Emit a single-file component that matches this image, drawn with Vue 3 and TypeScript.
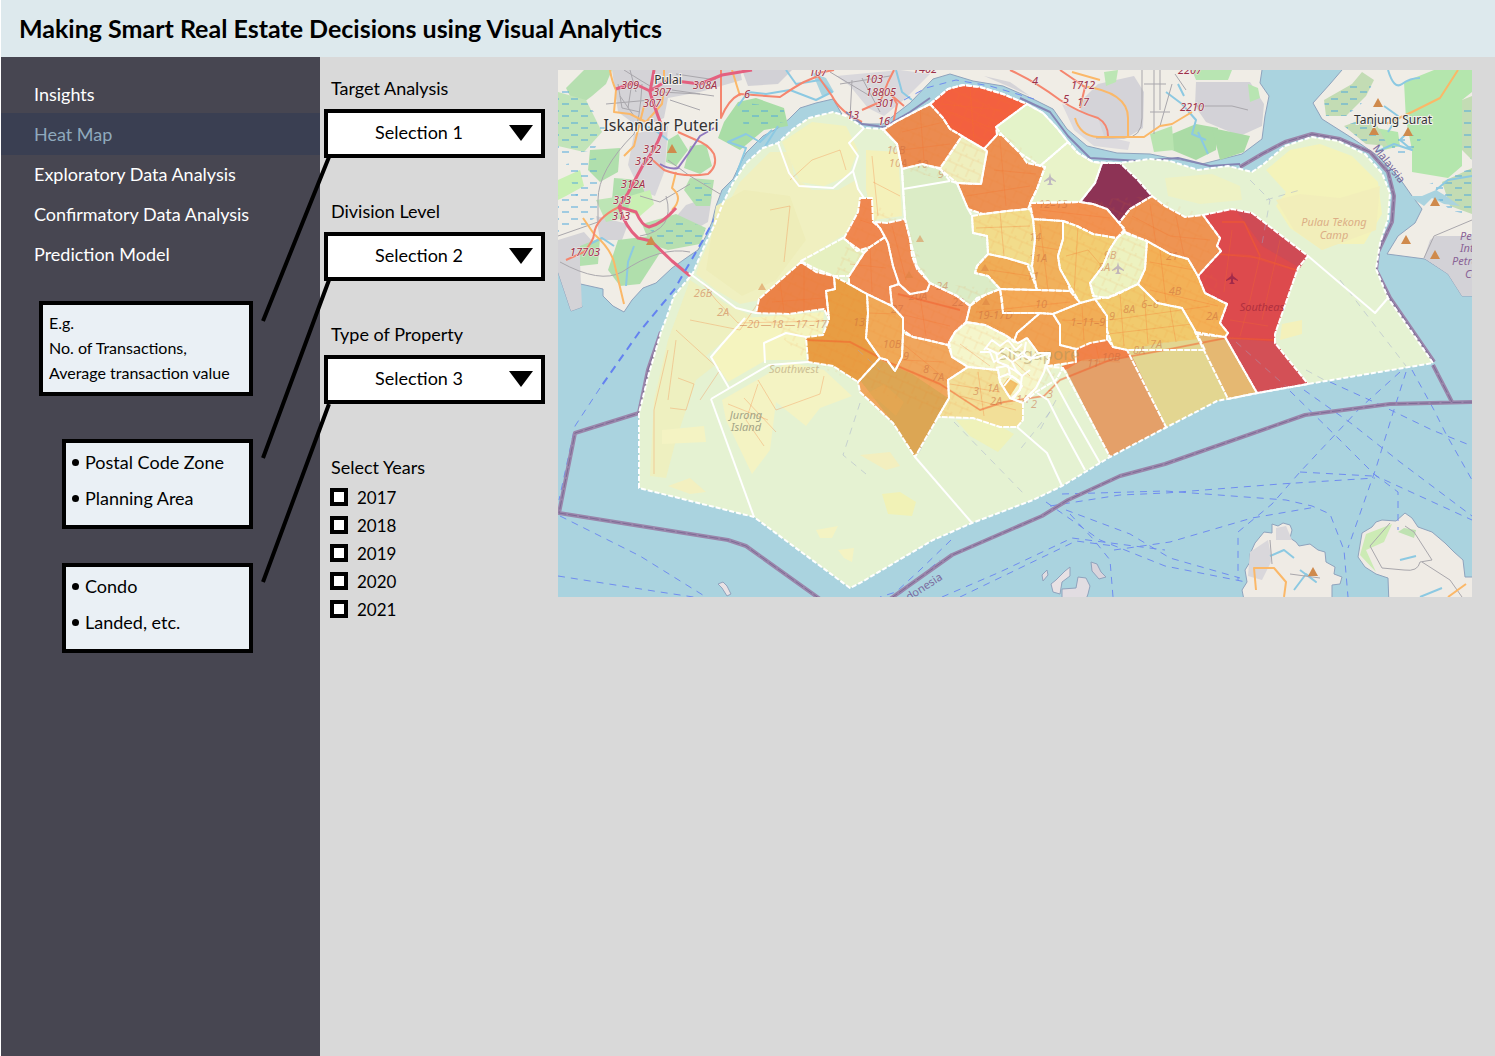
<script setup lang="ts">
import { ref } from 'vue'

interface Shape { points: string; fill: string }
interface Label { x: number; y: number; text: string }

const navItems = ['Insights', 'Heat Map', 'Exploratory Data Analysis', 'Confirmatory Data Analysis', 'Prediction Model']
const active = ref('Heat Map')

const options = ['Selection 1', 'Selection 2', 'Selection 3']
const filters = ref([
  { id: 'target', label: 'Target Analysis', value: 'Selection 1' },
  { id: 'division', label: 'Division Level', value: 'Selection 2' },
  { id: 'property', label: 'Type of Property', value: 'Selection 3' },
])
const years = ['2017', '2018', '2019', '2020', '2021']
const selectedYears = ref<string[]>([])

const coast =
  '639,488 639,413 648,377 661,332 666,319 674,296 693,273 703,249 714,226 723,203 733,183 746,163 763,148 778,143 793,129 809,118 833,112 846,116 864,128 883,129 897,121 930,104 948,89 963,85 980,87 1003,94 1027,104 1043,113 1057,128 1068,142 1078,153 1093,162 1120,163 1150,159 1170,161 1198,170 1228,166 1252,172 1265,163 1285,146 1312,137 1338,141 1365,154 1382,173 1390,193 1388,219 1380,243 1376,269 1388,298 1413,334 1433,363 1308,384 1258,393 1217,401 1167,427 1110,457 1062,486 1033,500 972,523 933,540 860,583 850,588 754,517'

const mainland: Shape[] = [
  { fill: '#f0ede6', points: '550,60 1262,60 1262,70 1260,83 1269,96 1265,116 1262,139 1242,154 1202,164 1170,158 1150,154 1117,153 1087,146 1067,129 1053,109 1033,99 1003,86 973,81 950,74 933,79 910,103 883,124 864,124 843,116 833,99 816,103 800,108 789,119 778,128 763,136 746,153 740,164 733,179 722,190 716,206 712,222 706,236 698,250 689,256 672,268 656,283 643,288 632,300 624,312 613,306 603,296 603,289 576,283 572,270 582,307 571,311 558,272 550,262' },
  { fill: '#f0ede6', points: '1342,60 1342,70 1330,84 1313,103 1322,119 1352,138 1378,156 1398,176 1412,196 1422,209 1415,223 1398,236 1387,254 1425,259 1448,274 1462,296 1480,296 1480,60' },
  { fill: '#efebe5', points: '1255,543 1264,532 1272,533 1272,524 1278,526 1283,523 1290,525 1292,530 1290,538 1296,542 1299,546 1310,544 1318,550 1325,552 1326,562 1335,567 1334,574 1342,577 1340,584 1332,585 1332,605 1245,605 1242,590 1247,582 1245,570 1250,562 1250,554' },
  { fill: '#efebe5', points: '1358,557 1362,533 1372,527 1376,522 1382,520 1396,521 1405,513 1412,518 1418,527 1432,532 1445,543 1454,552 1463,560 1465,577 1480,577 1480,605 1389,605 1388,578 1376,574 1365,567' },
  { fill: '#e8e1e4', points: '1065,571 1070,567 1070,576 1062,582 1060,594 1053,592 1051,584 1056,580' },
  { fill: '#e2dde2', points: '1078,577 1086,578 1090,586 1088,594 1084,605 1062,605 1062,589 1076,588' },
  { fill: '#d9d4dc', points: '1091,562 1097,564 1101,572 1106,577 1099,579 1092,571' },
  { fill: '#e2dde2', points: '1042,575 1047,570 1048,575 1043,581' },
  { fill: '#e8e1e4', points: '718,584 723,582 727,586 731,594 727,596 722,588' },
]

const landCover: Shape[] = [
  { fill: '#d4d3d7', points: '612,70 740,70 742,80 700,92 668,98 664,118 640,128 618,112' },
  { fill: '#d7d6da', points: '634,134 668,126 665,170 655,196 640,190 628,165' },
  { fill: '#d4d3d7', points: '558,240 584,232 600,250 580,262 582,307 571,311 558,272' },
  { fill: '#d4d3d7', points: '686,205 712,196 708,222 694,230 670,224' },
  { fill: '#d4d3d7', points: '596,216 628,224 622,240 600,240' },
  { fill: '#d2d1d6', points: '742,70 792,70 778,84 748,86' },
  { fill: '#d9d8dc', points: '836,76 900,70 930,74 906,98 884,116 868,108 850,86' },
  { fill: '#d5d4d8', points: '984,76 1010,82 1030,96 1012,88' },
  { fill: '#d4d3d8', points: '1098,84 1134,76 1144,92 1143,128 1128,137 1096,138 1078,118 1084,98' },
  { fill: '#dcdade', points: '1062,104 1098,118 1104,136 1130,142 1128,150 1094,146 1074,130' },
  { fill: '#d3d2d7', points: '1196,82 1250,82 1264,104 1262,126 1240,136 1206,122 1195,106' },
  { fill: '#b6dfb0', points: '584,70 612,70 606,84 592,96 576,108 566,88' },
  { fill: '#c2e4b9', points: '558,92 586,100 602,132 584,152 558,146' },
  { fill: '#b0dfac', points: '614,178 640,180 646,196 626,210 612,200' },
  { fill: '#b0dfac', points: '668,140 678,134 688,150 676,166 666,162' },
  { fill: '#b0dfac', points: '690,146 706,144 712,166 700,174 684,168' },
  { fill: '#b0dfac', points: '590,150 620,148 618,172 600,182 588,170' },
  { fill: '#a9dda6', points: '724,122 738,102 756,98 784,108 788,126 764,130 740,150 718,138' },
  { fill: '#b3e0ae', points: '690,178 714,180 710,206 696,206 684,190' },
  { fill: '#b6dfb0', points: '642,224 676,214 706,228 700,244 668,250 650,244' },
  { fill: '#b3e0ae', points: '580,246 600,238 598,264 580,266' },
  { fill: '#b0dfac', points: '618,240 650,236 662,250 640,284 620,286 608,270' },
  { fill: '#c9f0b3', points: '558,180 580,170 584,186 566,196 558,200' },
  { fill: '#c9f0b3', points: '630,196 650,190 654,204 640,216 628,212' },
  { fill: '#bde5b5', points: '596,200 622,196 624,218 606,222' },
  { fill: '#bce6b4', points: '1104,72 1118,70 1116,82 1106,86' },
  { fill: '#aadba5', points: '1172,134 1196,124 1218,128 1216,150 1196,160 1172,150' },
  { fill: '#aadba5', points: '1212,128 1250,136 1244,152 1220,160' },
  { fill: '#b8e5b2', points: '1192,70 1232,70 1228,80 1196,80' },
  { fill: '#b8e5b2', points: '1248,84 1258,88 1260,98 1250,102' },
  { fill: '#b9e4b0', points: '1150,134 1172,126 1174,150 1154,152' },
  { fill: '#b4e6ad', points: '1404,82 1434,70 1472,70 1472,92 1462,100 1462,166 1448,178 1412,172 1412,150 1406,120' },
  { fill: '#b4e6ad', points: '1376,128 1398,132 1400,146 1384,150' },
  { fill: '#c3dcb4', points: '1324,100 1352,84 1362,72 1374,80 1366,96 1346,116 1326,116' },
  { fill: '#c3dcb4', points: '1344,126 1372,116 1388,146 1366,144' },
  { fill: '#c3dcb4', points: '1462,100 1472,96 1472,160 1462,150' },
  { fill: '#c3dcb4', points: '1442,182 1472,168 1472,214 1450,206' },
  { fill: '#d3d2d7', points: '1430,240 1436,236 1472,236 1472,296 1462,296 1448,274 1424,258' },
  { fill: '#d9d7db', points: '1250,552 1268,540 1272,560 1262,580 1248,576' },
  { fill: '#d9d7db', points: '1276,528 1286,526 1292,540 1276,540' },
  { fill: '#ccebb5', points: '1360,555 1366,534 1392,524 1384,542 1366,550 1376,572' },
  { fill: '#bfe2b2', points: '1404,528 1416,530 1414,538 1398,532' },
]

const lagoons: string[] = [
  '1404,196 1422,196 1436,190 1446,196 1460,206 1444,204 1432,198 1424,206 1412,198',
  '812,72 826,78 834,92 822,96',
]

// Lighter reclaimed and inhabited land showing through the overlay
const paleLand: Shape[] = [
  { fill: '#f0f0c0', points: '700,262 716,226 740,182 770,152 790,152 794,176 812,190 838,190 856,180 862,198 848,232 800,262 760,300 740,304 716,290 696,274' },
  { fill: '#eef0c0', points: '690,280 726,304 752,316 720,344 706,356 714,366 696,380 676,440 666,478 650,476 654,400 668,340' },
  { fill: '#f2f2be', points: '782,142 812,122 846,126 858,150 848,176 824,186 800,182' },
  { fill: '#f5f4bf', points: '744,318 824,312 822,334 806,337 806,360 766,360 728,382 712,358' },
  { fill: '#eeedb9', points: '716,206 744,190 790,196 806,240 776,280 742,296 706,270' },
  { fill: '#f4f3c3', points: '722,400 764,376 788,362 824,370 852,396 820,408 806,426 776,402 770,450 752,474 726,420' },
  { fill: '#f4f3c3', points: '662,430 704,426 706,442 662,444' },
  { fill: '#f3f0c0', points: '668,486 690,478 706,492 690,494' },
  { fill: '#f4f3ba', points: '1266,170 1290,150 1320,144 1352,156 1378,182 1382,214 1364,244 1336,244 1322,250 1290,228 1276,206 1286,192' },
  { fill: '#f2eeba', points: '1276,200 1300,194 1340,198 1380,186 1376,230 1322,250 1294,230' },
  { fill: '#eef2c4', points: '1165,178 1212,174 1240,186 1242,200 1200,204 1168,196' },
  { fill: '#f4f1ba', points: '866,150 898,152 902,216 874,220 866,190' },
  { fill: '#eff2ba', points: '956,420 990,420 1014,434 998,452 970,436' },
  { fill: '#f1f2b6', points: '882,494 900,492 916,502 912,516 888,514' },
  { fill: '#f4f3c3', points: '816,530 838,526 832,538 820,538' },
  { fill: '#f4f3c3', points: '838,550 854,548 852,562 844,558' },
  { fill: '#f3efbf', points: '860,455 890,452 900,466 886,470' },
  { fill: '#f4f1bb', points: '1282,324 1302,320 1302,334 1280,340' },
]

const regions: Shape[] = [
  { fill: '#f3603f', points: '930,104 948,89 963,85 980,87 1003,94 1027,104 996,127 997,135 984,149 962,136 950,129 943,118' },
  { fill: '#eb8b50', points: '930,104 943,118 950,129 962,136 940,168 922,164 902,169 897,144 883,130 897,121' },
  { fill: '#efefbe', points: '962,136 984,149 987,151 981,184 957,183 940,169' },
  { fill: '#e4f3c9', points: '1027,104 1043,113 1057,128 1068,142 1040,166 1020,153 1002,135 996,127' },
  { fill: '#ed9052', points: '984,149 997,135 1002,135 1020,153 1027,163 1045,167 1037,189 1030,204 1028,209 1007,211 983,214 968,209 957,183 981,184 987,151' },
  { fill: '#e9f3c9', points: '1040,166 1068,142 1078,153 1093,162 1102,163 1095,183 1080,202 1030,203 1037,189 1045,167' },
  { fill: '#8d3355', points: '1102,163 1120,163 1137,179 1152,196 1130,209 1119,223 1107,209 1093,204 1080,202 1095,183' },
  { fill: '#f29251', points: '1030,203 1080,202 1093,204 1107,209 1119,223 1125,229 1117,238 1093,234 1077,226 1063,221 1033,219' },
  { fill: '#ee9453', points: '1152,196 1165,206 1185,217 1203,215 1220,238 1217,246 1221,251 1207,266 1198,276 1188,259 1170,254 1147,241 1127,234 1119,223 1130,209' },
  { fill: '#dd4a4d', points: '1203,215 1232,209 1252,213 1308,256 1298,268 1275,334 1275,343 1308,384 1257,393 1225,337 1228,333 1220,323 1227,304 1205,293 1198,276 1207,266 1221,251 1217,246 1220,238' },
  { fill: '#f3b157', points: '1147,241 1170,254 1188,259 1198,276 1205,293 1227,304 1220,323 1228,333 1225,337 1197,334 1182,308 1157,303 1138,284 1145,269' },
  { fill: '#f1ca6d', points: '1095,299 1109,297 1138,284 1157,303 1182,308 1197,334 1205,350 1127,350 1113,347 1107,330 1107,316' },
  { fill: '#e3d691', points: '1127,350 1160,343 1200,339 1228,399 1217,401 1167,427' },
  { fill: '#e5b872', points: '1195,332 1225,337 1257,393 1228,399' },
  { fill: '#edf2c0', points: '1125,232 1147,241 1145,269 1138,284 1120,293 1108,298 1093,296 1090,283 1103,266 1110,249 1117,238' },
  { fill: '#f2cd72', points: '1063,221 1077,226 1093,234 1117,238 1110,249 1103,266 1090,283 1095,299 1080,303 1068,283 1060,269 1058,256 1063,239' },
  { fill: '#f1b15c', points: '1033,219 1063,221 1063,239 1058,256 1060,269 1068,283 1070,291 1037,290 1032,266 1035,239' },
  { fill: '#f2dc8b', points: '972,216 983,214 1007,211 1030,209 1033,219 1035,239 1032,266 1027,264 1007,258 988,254 987,236 973,233' },
  { fill: '#f0ad57', points: '988,254 1007,258 1027,264 1032,276 1037,290 1000,289 988,276 975,273 977,266' },
  { fill: '#dbecc6', points: '902,169 922,164 940,169 950,181 957,183 968,209 972,216 973,233 987,236 988,254 977,266 975,273 988,276 1000,289 985,295 977,298 970,306 957,296 930,283 917,266 910,239 905,219' },
  { fill: '#ee8b53', points: '875,222 887,223 905,219 910,239 912,256 917,269 930,283 927,291 910,294 899,284 893,266 888,243 880,228' },
  { fill: '#ef8750', points: '860,198 872,198 873,222 880,228 885,237 870,247 857,251 844,238 858,212' },
  { fill: '#ee8b52', points: '885,237 888,243 893,266 899,284 890,287 892,306 867,294 849,284 849,276 864,253 870,247' },
  { fill: '#e6f0c0', points: '801,261 843,238 864,253 849,276 834,276 816,269' },
  { fill: '#eb8348', points: '801,262 816,272 834,276 835,289 826,291 829,319 824,309 789,314 756,313 759,299' },
  { fill: '#e89d43', points: '834,276 849,284 867,294 868,313 866,338 880,358 858,382 833,366 808,362 806,337 823,335 829,319 826,291 835,289' },
  { fill: '#f0a957', points: '867,294 892,306 903,318 903,333 902,357 895,371 887,360 880,358 866,338 868,313' },
  { fill: '#f0a65d', points: '880,358 887,360 895,371 902,357 903,333 913,337 927,340 948,345 952,357 968,367 948,380 949,398 938,417 915,457 893,423 860,392 858,382' },
  { fill: '#dca654', points: '860,380 880,360 912,374 948,398 938,417 915,457 893,423' },
  { fill: '#f08f57', points: '890,287 899,284 910,294 927,291 930,283 957,296 970,306 966,323 955,332 948,345 927,340 913,337 903,330 903,318 892,306' },
  { fill: '#eea152', points: '970,306 985,295 1000,289 1002,300 1003,313 1040,313 1017,333 1014,342 1005,335 985,325 966,322' },
  { fill: '#f3a956', points: '1000,289 1037,290 1070,291 1080,303 1053,314 1040,313 1003,313' },
  { fill: '#f1ae57', points: '1053,314 1080,303 1095,299 1107,316 1107,340 1090,343 1077,349 1060,345 1060,325' },
  { fill: '#f0a254', points: '1040,313 1053,314 1060,325 1060,345 1075,349 1076,362 1048,366 1050,353 1038,353 1027,338 1018,343 1014,341 1017,333' },
  { fill: '#f1824a', points: '1108,340 1113,347 1127,350 1136,364 1063,370 1062,366 1076,362 1077,349 1090,343' },
  { fill: '#e4a069', points: '1066,370 1082,360 1132,356 1166,427 1110,457' },
  { fill: '#f2df98', points: '948,380 968,367 998,370 1000,382 1010,398 1023,403 1023,420 1017,427 1000,427 973,418 938,417 949,398' },
  { fill: '#f5f6cb', points: '966,322 985,325 1005,335 1018,343 1027,338 1038,353 1050,353 1046,366 1063,368 1056,380 1036,392 1023,403 1010,398 1000,382 998,370 968,367 952,357 949,342 955,332' },
]

// Regions whose land and sea parts share one outline
const seamless = ['#dca654', '#e4a069', '#f1824a', '#e3d691']
const outlined = regions.filter((r) => !seamless.includes(r.fill))

const borders: string[] = [
  '778,143 789,173 799,186 833,188 853,171 858,156 849,143 864,128',
  '853,171 858,189 864,198',
  '689,273 716,293 736,308 756,313',
  '745,318 723,343 711,357 729,388',
  '711,399 769,365 808,362',
  '711,399 754,517',
  '765,363 764,343 786,333 806,337',
  '883,129 897,144 902,169 903,189 905,219',
  '903,189 950,181',
  '915,457 972,523',
  '1017,427 1047,453 1062,486',
  '1037,393 1048,400 1060,424 1085,470',
  '1046,366 1072,414 1100,463',
]

const centralBorders: string[] = [
  '984,350 992,340 1000,346 1008,340 1016,350 1022,344',
  '980,352 990,352 994,362 1004,356 1012,362 1022,356 1034,358 1048,354',
  '986,348 998,354 1006,348 1018,356 1026,350',
  '996,368 1006,366 1014,370 1022,376 1030,370',
  '998,378 1008,374 1018,380 1022,386 1014,398',
  '1004,386 1012,376 1022,384',
  '996,352 998,362 1008,366 1010,374',
  '1012,362 1016,370 1022,376 1020,390 1012,398',
  '1024,400 1036,388 1044,372 1046,364',
  '1026,342 1024,354 1030,360 1036,354',
]

const redRoads: string[] = [
  'M654 70L650 92Q654 106 661 124V134Q656 148 643 165L628 193L619 207Q626 228 638 238L651 241L672 261L695 280',
  'M619 207L636 212Q642 226 649 227Q662 224 676 208',
  'M616 89L633 83L650 91L668 80L700 84L722 75L752 70',
]
const coralRoads: string[] = [
  'M566 260L584 252Q594 240 594 234Q596 218 619 207',
  'M721 70V118Q728 100 740 94L780 97Q796 86 804 82L818 76L832 96Q840 112 862 122',
  'M648 156L664 170Q684 178 708 174Q718 166 714 154Q708 144 696 140L678 132',
  'M862 110L880 102L888 82L894 70M893 124L897 104L890 92M904 106L890 94',
  'M1010 70Q1036 82 1060 100Q1078 112 1098 118Q1108 124 1108 136M1060 70L1085 87L1080 108',
  'M818 73L834 70',
]
const amberRoads: string[] = [
  'M610 70Q612 82 616 90L614 112L630 114L646 122L662 104L664 88M664 70V84',
  'M644 106L634 146L624 156',
  'M583 218L594 234Q610 248 614 262L624 304',
  'M676 172L672 188Q684 198 672 210',
  'M732 70L740 96',
  'M1072 72L1100 80M1082 86Q1128 92 1128 118V136M1075 118Q1080 136 1098 137H1144L1160 126L1172 124L1192 112',
  'M1458 70L1440 98L1412 112L1386 124',
  'M1256 590L1254 568H1274L1286 582L1284 597M1448 597L1466 584',
]
const greyRoads: string[] = [
  'M642 84Q640 120 634 134Q598 170 598 200V222L558 236',
  'M624 70L640 80L660 92L700 94M606 104L650 100M620 96L634 116M676 74L716 80M672 90L714 96M630 70L636 92M618 84L622 108L640 112M670 100L700 110M632 82L628 108',
  'M560 262Q600 284 622 272Q660 246 690 252M668 160L690 176L720 194M640 196L660 202L690 184M666 196Q676 230 640 236',
  'M1142 70V118Q1142 138 1124 138H1096M1154 70V134M1172 84L1160 126M1144 84H1166M1150 112H1170M1160 70V110',
  'M1424 258L1434 236L1472 220M1270 540L1272 564M1290 574L1320 578',
  'M1390 523L1370 546L1382 568L1404 570Q1418 572 1420 562L1432 560L1414 532L1405 526M1422 562L1450 580L1462 597',
  'M830 72L870 96M852 80L850 118M840 84L890 76M862 78L880 112M1196 106H1232L1248 110M1175 74L1186 90',
]
const streams: string[] = [
  'M786 70L796 84L820 80L832 92L816 100L790 90L766 94L748 92L738 106',
  'M734 186L738 170L746 148L728 142L746 134L760 142L772 130M764 148L778 126',
  'M590 244L602 238L614 246M626 286L628 262L634 246M632 124L652 128L668 140',
  'M1166 92L1182 104L1196 120L1192 134L1206 140M1178 84L1184 96M1198 132L1208 154',
  'M1388 70Q1394 90 1402 84T1420 78M1384 106L1398 116L1388 132M1376 152L1394 144L1412 150L1400 140L1408 132',
  'M1436 190L1448 180L1472 176M896 70L902 92L912 100',
  'M1270 556L1284 550L1294 558M1294 590L1306 574L1316 582L1300 570M1400 560L1416 556M1420 597L1442 588',
]
const ferries: string[] = [
  'M600 388L575 426L559 500',
  'M560 516L640 556L706 597M558 576L660 592L700 598',
  'M1062 494L1165 491L1286 500L1312 506L1330 514L1344 550L1348 597',
  'M1050 506L1120 495L1166 493L1280 484L1375 478',
  'M1046 502L1100 540L1165 566L1246 582M1066 510L1130 534L1170 558L1240 578',
  'M1070 514L1094 540L1110 560L1113 597M942 597L1000 572L1072 538L1165 550M960 597L1076 541L1114 546',
  'M1114 550L1170 542L1252 518L1316 507M1400 372L1360 408L1300 472L1272 504L1238 532V580',
  'M1406 372L1392 416L1376 468L1348 548M1412 370L1434 410L1446 434L1472 480M1290 391L1340 440L1376 476L1472 520',
  'M1304 390L1352 424L1400 462L1472 516M1330 382L1374 402L1432 430L1472 446M1300 472L1372 476M1374 474L1398 492V530',
  'M951 540L920 570L896 592L880 597M900 594L940 560',
  'M904 100L926 88L956 80L990 86L1034 99',
]
const innerFerries: string[] = [
  'M858 350L880 370M954 422L1024 494M860 403L843 455L866 474M1056 400L1040 430M934 424L918 454M1050 412L1018 452',
  'M1250 180L1270 200L1262 244M1266 200L1300 190M1306 370L1328 382M1340 280L1406 366M1236 342L1290 390',
]
const boundary: string[] = [
  'M661 332L648 370L639 413L575 433L559 513L634 525L728 540L746 546L820 599',
  'M890 599L952 555L1042 516L1068 500L1120 476L1165 464L1305 415L1390 404L1474 402M1433 365L1452 402',
  'M1240 167L1262 154L1285 142L1312 134L1340 139L1370 152L1388 172L1394 196L1392 222L1378 252L1376 270L1390 298L1434 362',
]
const thinBoundary = 'M846 112L862 124L884 127L910 112L930 98M1020 98L1050 112L1068 136L1090 158L1140 161L1178 158L1210 166L1240 164'

const overlayRoads: string[] = [
  'M700 280L716 300L738 323L824 321M690 320L740 330L760 300M676 330L720 370L700 400M668 400L676 340M758 380L776 410L820 394L824 376',
  'M770 210L790 206L784 262M790 180L812 160L840 150L846 170M872 156L878 216M873 182L900 196',
  'M806 340L850 342L888 362L940 384L980 410L1004 402L1044 396L1060 380L1110 360L1165 350L1226 338L1275 340',
  'M903 344L930 366L948 382M902 360L944 362M868 313L896 314M772 302L824 298M780 282L784 312M804 268V310',
  'M850 264L886 268M870 246L872 292M860 220L878 226M892 226L906 280M898 294L960 310M920 296L926 336M900 314L950 326',
  'M902 132L944 122M920 110L924 160M902 150L950 144M942 104L1000 110M970 88L974 140M950 112L992 128',
  'M994 170L1036 174M1000 140L1006 206M966 196L1030 186M976 228L1030 226M1000 212L1004 256M990 270L1030 276',
  'M1040 224L1048 290M1066 256L1088 250L1100 264M1036 246L1060 250M1040 210L1110 218M1078 226L1074 294M976 312L1070 302',
  'M1132 216L1170 236L1210 240M1150 204L1156 244M1176 216L1184 256M1150 262L1194 270M1160 250L1166 302M1150 290L1218 306',
  'M1110 320L1210 306M1120 294L1124 346M1144 292L1148 344M1170 308L1176 342M1108 334L1192 324M1216 254L1260 258L1296 270',
  'M1222 222L1244 222L1260 256L1250 300L1240 336M1232 230L1224 292M1280 240L1262 320M1230 320L1268 326M1062 320L1104 322M1082 306L1084 340',
  'M950 384L1000 392M960 396L1016 410M978 372L984 416M1008 356L1030 376M960 344L990 366M1070 360L1120 362M1096 346L1100 364',
  'M654 474V410L668 350M678 378L694 384L686 410L670 408M744 398L776 432M758 384L746 420L764 446M728 404L768 420',
]

const roadNumbers: Label[] = [
  { x: 630, y: 89, text: '309' }, { x: 662, y: 96, text: '307' }, { x: 652, y: 107, text: '307' },
  { x: 705, y: 89, text: '308A' }, { x: 747, y: 98, text: '6' }, { x: 818, y: 76, text: '107' },
  { x: 853, y: 119, text: '13' }, { x: 874, y: 83, text: '103' }, { x: 881, y: 96, text: '18805' },
  { x: 885, y: 107, text: '301' }, { x: 884, y: 125, text: '16' }, { x: 652, y: 153, text: '312' },
  { x: 644, y: 165, text: '312' }, { x: 633, y: 188, text: '312A' }, { x: 622, y: 204, text: '313' },
  { x: 621, y: 220, text: '313' }, { x: 585, y: 256, text: '17703' }, { x: 1035, y: 85, text: '4' },
  { x: 1083, y: 89, text: '1712' }, { x: 1066, y: 103, text: '5' }, { x: 1083, y: 106, text: '17' },
  { x: 1192, y: 111, text: '2210' }, { x: 1190, y: 74, text: '2207' }, { x: 925, y: 73, text: '1402' },
]
const faintNumbers: Label[] = [
  { x: 703, y: 297, text: '26B' }, { x: 723, y: 316, text: '2A' }, { x: 748, y: 328, text: '—20' },
  { x: 772, y: 328, text: '—18' }, { x: 796, y: 328, text: '—17' }, { x: 818, y: 328, text: '–17' },
  { x: 896, y: 154, text: '10B' }, { x: 898, y: 167, text: '10A' }, { x: 922, y: 168, text: '10' },
  { x: 941, y: 178, text: '9' }, { x: 859, y: 326, text: '13' },
  { x: 892, y: 348, text: '10B' }, { x: 906, y: 360, text: '9' }, { x: 926, y: 373, text: '8' },
  { x: 938, y: 381, text: '7A' }, { x: 976, y: 395, text: '3' }, { x: 993, y: 392, text: '1A' },
  { x: 996, y: 405, text: '2A' }, { x: 1022, y: 403, text: '1A' }, { x: 1034, y: 408, text: '2' },
  { x: 1050, y: 398, text: '3' }, { x: 995, y: 319, text: '19-17D' }, { x: 1041, y: 308, text: '10' },
  { x: 1035, y: 241, text: '14' }, { x: 1038, y: 262, text: '11A' }, { x: 1033, y: 280, text: '11' },
  { x: 1110, y: 259, text: '9B' }, { x: 1104, y: 271, text: '8A' }, { x: 1088, y: 326, text: '1–11–9' },
  { x: 1112, y: 320, text: '9' }, { x: 1129, y: 313, text: '8A' }, { x: 1150, y: 308, text: '6–6' },
  { x: 1175, y: 295, text: '4B' }, { x: 1212, y: 320, text: '2A' }, { x: 1093, y: 367, text: '11' },
  { x: 1111, y: 361, text: '10B' }, { x: 1139, y: 354, text: '8A' }, { x: 1156, y: 348, text: '7A' },
  { x: 1053, y: 208, text: '12–13' }, { x: 942, y: 290, text: '24' }, { x: 958, y: 306, text: '22' },
  { x: 918, y: 300, text: '20A' }, { x: 897, y: 313, text: '27' }, { x: 1172, y: 260, text: '21' },
]
const peaks = ['672,149', '651,241', '1378,103', '1374,131', '1408,132', '1435,202', '1406,240', '1435,255', '1313,572']
const faintPeaks = ['920,239', '985,268', '909,275', '762,287', '986,302']
</script>

<template>
  <div class="page">
    <header class="banner">
      <h1>Making Smart Real Estate Decisions using Visual Analytics</h1>
    </header>

    <div class="body">
      <aside class="sidebar">
        <nav>
          <a
            v-for="item in navItems"
            :key="item"
            href="#"
            :class="{ active: item === active }"
            @click.prevent="active = item"
          >{{ item }}</a>
        </nav>
        <div class="notes">
          <div class="note wide">
            <p>E.g.</p>
            <p>No. of Transactions,</p>
            <p>Average transaction value</p>
          </div>
          <ul class="note list">
            <li>Postal Code Zone</li>
            <li>Planning Area</li>
          </ul>
          <ul class="note list">
            <li>Condo</li>
            <li>Landed, etc.</li>
          </ul>
        </div>
      </aside>

      <main class="content">
        <form class="filters" @submit.prevent>
          <div v-for="f in filters" :key="f.id" class="field">
            <label :for="f.id">{{ f.label }}</label>
            <div class="select">
              <select :id="f.id" v-model="f.value">
                <option v-for="o in options" :key="o">{{ o }}</option>
              </select>
              <svg viewBox="0 0 24 16" aria-hidden="true"><path d="M0 0H24L12 16Z" /></svg>
            </div>
          </div>
          <fieldset>
            <legend>Select Years</legend>
            <label v-for="y in years" :key="y" class="year">
              <input v-model="selectedYears" type="checkbox" :value="y">
              <span>{{ y }}</span>
            </label>
          </fieldset>
        </form>

        <section class="map">
          <svg viewBox="558 70 914 527" role="img" aria-label="Heat map of Singapore">
            <defs>
              <pattern id="marsh" width="19" height="12" patternUnits="userSpaceOnUse">
                <path d="M1 3H8M11 8H18" stroke="#4fa9dc" stroke-width="1" />
              </pattern>
              <pattern id="streets" width="13" height="11" patternUnits="userSpaceOnUse" patternTransform="rotate(24)">
                <path d="M0 3H13M5 3V11M10 0V3" stroke="#f0781e" stroke-opacity=".13" fill="none" />
              </pattern>
            </defs>
            <rect x="558" y="70" width="914" height="527" fill="#aad3df" />
            <polygon v-for="(s, i) in mainland" :key="'m' + i" :points="s.points" :fill="s.fill" class="shore" />
            <polygon v-for="(s, i) in landCover" :key="'c' + i" :points="s.points" :fill="s.fill" />
            <polygon v-for="(p, i) in lagoons" :key="'l' + i" :points="p" fill="#aad3df" />
            <g fill="url(#marsh)">
              <polygon points="558,92 576,88 606,128 594,150 558,156" />
              <polygon points="558,196 596,188 600,214 584,226 558,232" />
              <polygon points="566,164 596,158 600,184 576,196" />
              <polygon points="650,230 676,222 706,226 700,244 668,246" />
              <polygon points="694,182 714,184 710,204 696,202" />
              <polygon points="740,102 784,108 784,122 744,128" />
              <polygon points="1324,100 1352,84 1372,84 1366,100 1346,116 1326,116" />
              <polygon points="1344,126 1372,116 1388,146 1366,144" />
              <polygon points="1392,138 1424,134 1410,158 1392,156" />
              <polygon points="1424,186 1472,168 1472,216 1450,210" />
              <polygon points="1462,100 1472,100 1472,160 1462,150" />
            </g>
            <g fill="none" stroke-linejoin="round">
              <path v-for="d in streams" :key="d" :d="d" stroke="#8cc9e2" stroke-width="2" />
              <path v-for="d in greyRoads" :key="d" :d="d" stroke="#a9a7ac" stroke-width="1" />
              <path v-for="d in amberRoads" :key="d" :d="d" stroke="#fbb868" stroke-width="2" />
              <path v-for="d in coralRoads" :key="d" :d="d" stroke="#f5866f" stroke-width="2" />
              <path v-for="d in redRoads" :key="d" :d="d" stroke="#e4607f" stroke-width="3" />
              <path d="M714 128L700 136L688 154L678 168Q670 170 660 164" stroke="#8f78bd" stroke-width="2" />
              <path v-for="d in ferries" :key="d" :d="d" stroke="#6f8cf0" stroke-width="1" stroke-dasharray="7 6" />
              <path d="M723 203L703 240L674 290L640 331L600 388" stroke="#6482f0" stroke-width="2" stroke-dasharray="8 6" />
              <path v-for="d in boundary" :key="d" :d="d" stroke="#9a86ab" stroke-width="4" />
              <path v-for="d in boundary" :key="d + 'c'" :d="d" stroke="#7d6b95" stroke-width="1" stroke-dasharray="9 2" />
              <path :d="thinBoundary" stroke="#8586b4" stroke-width="2" />
            </g>

            <polygon :points="coast" fill="#e5f2d2" />
            <polygon v-for="(s, i) in paleLand" :key="'p' + i" :points="s.points" :fill="s.fill" />
            <polygon v-for="(s, i) in regions" :key="'r' + i" :points="s.points" :fill="s.fill" />
            <polygon points="1235,209 1252,213 1308,256 1300,268 1262,246" fill="#cf4b55" />
            <polygon points="1225,337 1275,342 1308,384 1257,393" fill="#d35056" />
            <polygon points="862,396 884,384 904,402 896,416 878,400" fill="#eaa650" opacity=".5" />
            <polygon points="1036,392 1046,370 1063,368 1072,388 1060,410 1046,400" fill="#e8f3cf" />
            <polygon points="1002,386 1008,378 1018,384 1010,396" fill="#f2c26b" />
            <polygon points="756,313 801,262 834,276 849,238 860,198 905,219 930,283 1000,289 975,273 988,254 972,216 957,183 900,169 883,130 963,85 1027,104 996,127 1045,167 1030,204 1152,196 1203,215 1228,333 1127,350 1063,368 1023,403 938,417 808,362" fill="url(#streets)" />
            <g fill="none" stroke-linejoin="round">
              <path v-for="d in overlayRoads" :key="d" :d="d" stroke="#f4702c" stroke-opacity=".28" stroke-width="1" />
              <path d="M806 340L850 342L888 362L940 384L980 410L1004 402L1044 396L1060 380L1110 360L1165 350L1226 338L1275 340M898 294L960 310M1216 254L1250 256L1296 270M1222 222L1244 222L1260 256" stroke="#f3592e" stroke-opacity=".4" stroke-width="2" />
              <path v-for="d in innerFerries" :key="d" :d="d" stroke="#9fa9cb" stroke-opacity=".45" stroke-dasharray="7 6" />
            </g>
            <path v-for="p in faintPeaks" :key="p" d="M-4 3H4L0 -4Z" fill="#d9803f" opacity=".5" :transform="`translate(${p})`" />
            <g class="road faint">
              <text v-for="l in faintNumbers" :key="l.text + l.x" :x="l.x" :y="l.y">{{ l.text }}</text>
            </g>
            <text x="1039" y="360" class="city">Singapore</text>
            <g fill="none" stroke="#fff" stroke-width="2" stroke-linejoin="round">
              <polygon v-for="(s, i) in outlined" :key="'b' + i" :points="s.points" class="edge" />
              <polyline points="1063,368 1110,457" class="edge" />
              <polyline points="1108,340 1113,347 1127,350 1166,427" class="edge" />
              <polyline v-for="p in borders" :key="p" :points="p" />
              <polyline v-for="p in centralBorders" :key="p" :points="p" />
              <polyline points="1308,256 1375,313 1388,298" />
              <polygon :points="coast" stroke-dasharray="5 2" />
            </g>

            <path v-for="p in peaks" :key="p" d="M-5 4H5L0 -5Z" fill="#cf8a4c" :transform="`translate(${p})`" />
            <g fill="#9d88b8">
              <path opacity=".55" transform="translate(1050 179)" d="M0 -6L1 -2L6 2V3L1 1V4L3 6H-3L-1 4V1L-6 3V2L-1 -2Z" />
              <path opacity=".55" transform="translate(1118 268)" d="M0 -6L1 -2L6 2V3L1 1V4L3 6H-3L-1 4V1L-6 3V2L-1 -2Z" />
              <path fill="#a22a4a" transform="translate(1232 278)" d="M0 -6L1 -2L6 2V3L1 1V4L3 6H-3L-1 4V1L-6 3V2L-1 -2Z" />
            </g>

            <g class="road">
              <text v-for="l in roadNumbers" :key="l.text + l.x" :x="l.x" :y="l.y">{{ l.text }}</text>
            </g>
            <g class="place">
              <text x="668" y="84" font-size="12">Pulai</text>
              <text x="661" y="131" font-size="16">Iskandar Puteri</text>
              <text x="1393" y="124" font-size="12">Tanjung Surat</text>
            </g>
            <g class="area">
              <text x="746" y="419" fill="#a3a487">Jurong</text>
              <text x="746" y="431" fill="#a3a487">Island</text>
              <text x="794" y="373" fill="#cdbf94">Southwest</text>
              <text x="1334" y="226" fill="#dcae86">Pulau Tekong</text>
              <text x="1334" y="239" fill="#dcae86">Camp</text>
              <text x="1262" y="311" fill="#b0303f">Southeas</text>
              <g fill="#8a6496">
                <text x="1460" y="240" class="start">Pen</text>
                <text x="1460" y="252" class="start">Inte</text>
                <text x="1452" y="265" class="start">Petro</text>
                <text x="1465" y="278" class="start">Co</text>
              </g>
            </g>
            <g class="country">
              <text transform="translate(1386 166) rotate(52)">Malaysia</text>
              <text transform="translate(926 590) rotate(-33)">donesia</text>
            </g>
          </svg>
        </section>
      </main>

      <svg class="connectors" viewBox="0 0 340 540" aria-hidden="true">
        <path d="M329 100L263 264M329 223L263 401M329 347L263 525" />
      </svg>
    </div>
  </div>
</template>

<style>
body {
  margin: 0;
  background: #fff;
}
</style>

<style scoped>
* {
  box-sizing: border-box;
}

.page {
  display: flex;
  flex-direction: column;
  min-height: 100vh;
  padding-left: 1px;
  font-family: Lato, "Open Sans", sans-serif;
  font-size: 18px;
  color: #000;
}

.banner {
  display: flex;
  align-items: center;
  height: 57px;
  padding: 0 18px 2px;
  background: #dde9ed;
}

h1 {
  margin: 0;
  font-size: 25px;
  line-height: 32px;
  font-weight: 700;
}

.body {
  position: relative;
  display: flex;
  flex: 1;
}

.sidebar {
  flex: 0 0 319px;
  padding-top: 16px;
  background: #474651;
}

nav {
  display: flex;
  flex-direction: column;
  padding-top: 2px;
}

nav a {
  margin-top: -2px;
  padding-left: 33px;
  line-height: 42px;
  color: #fff;
  text-decoration: none;
}

nav a.active {
  background: #3a3f52;
  color: #8fa9bd;
}

.notes {
  display: flex;
  flex-direction: column;
  align-items: flex-end;
  padding: 26px 67px 40px 0;
}

.note {
  width: 191px;
  height: 90px;
  margin: 0 0 34px;
  border: 4px solid #000;
  background: #eaf0f5;
  white-space: nowrap;
}

.note.wide {
  width: 214px;
  height: 95px;
  margin-bottom: 43px;
  padding: 5px 6px;
  font-size: 16px;
  line-height: 25px;
}

.note p {
  margin: 0;
}

.list {
  padding: 1px 6px;
  line-height: 36px;
  list-style: none;
}

.list li {
  display: flex;
  align-items: center;
  gap: 6px;
}

.list li::before {
  width: 7px;
  height: 7px;
  border-radius: 50%;
  background: #000;
  content: "";
}

.content {
  display: flex;
  flex: 1;
  align-items: flex-start;
  min-width: 0;
  padding-right: 23px;
  background: #d9d9d9;
}

.filters {
  flex: 0 0 225px;
  padding: 18px 0 0 4px;
}

.field {
  margin-bottom: 40px;
}

.field > label {
  display: block;
  margin-bottom: 8px;
  padding-left: 7px;
  line-height: 26px;
}

.select {
  position: relative;
}

select {
  display: block;
  width: 100%;
  height: 49px;
  margin: 0;
  padding: 0 40px 4px 47px;
  border: 4px solid #000;
  border-radius: 0;
  appearance: none;
  background: #fff;
  color: #000;
  font: inherit;
}

.select svg {
  position: absolute;
  top: 16px;
  right: 12px;
  width: 24px;
  height: 16px;
  pointer-events: none;
}

fieldset {
  margin: 50px 0 0;
  padding: 0 0 0 6px;
  border: 0;
}

legend {
  padding: 0 0 3px 1px;
  line-height: 26px;
}

.year {
  display: flex;
  align-items: center;
  gap: 9px;
  height: 28px;
  font-size: 17px;
}

.year input {
  width: 18px;
  height: 18px;
  margin: 0;
  border: 4px solid #000;
  appearance: none;
  background: #fff;
}

.year input:checked {
  background: #474651;
}

.map {
  flex: 1;
  min-width: 0;
  margin: 13px 0 0 13px;
}

.map svg {
  display: block;
  width: 100%;
  height: auto;
}

.shore {
  stroke: #8fa3bd;
  stroke-width: 1;
}

.edge {
  stroke-dasharray: 6 1;
}

.map text {
  font-family: "Noto Sans", sans-serif;
  text-anchor: middle;
}

.road text {
  fill: #9c3048;
  font-size: 11px;
  font-style: italic;
  paint-order: stroke;
  stroke: #f3e9e6;
  stroke-width: 1;
}

.road.faint text {
  fill: #c8683c;
  fill-opacity: .5;
  stroke: none;
}

.map .city {
  fill: #a8925a;
  fill-opacity: .5;
  font-size: 17px;
}

.place text {
  fill: #333;
  paint-order: stroke;
  stroke: #f3f1ee;
  stroke-width: 2;
}

.area text {
  font-size: 11px;
  font-style: italic;
}

.map .area .start {
  text-anchor: start;
}

.country text {
  fill: #7a6b9e;
  font-size: 11px;
}

.connectors {
  position: absolute;
  top: 0;
  left: -1px;
  width: 340px;
  height: 540px;
  pointer-events: none;
  fill: none;
  stroke: #000;
  stroke-width: 4;
}
</style>
